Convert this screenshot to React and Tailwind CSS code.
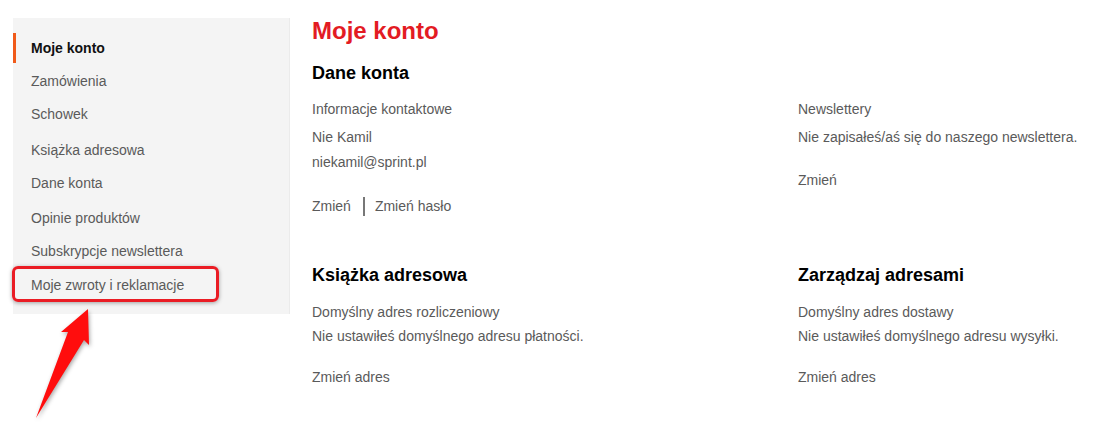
import React from 'react';

const navItems = [
    { label: 'Moje konto', active: true, gap: 'mt-[15px]' },
    { label: 'Zamówienia', gap: 'mt-[3px]' },
    { label: 'Schowek', gap: 'mt-[3px]' },
    { label: 'Książka adresowa', gap: 'mt-[6px]' },
    { label: 'Dane konta', gap: 'mt-[3px]' },
    { label: 'Opinie produktów', gap: 'mt-[5px]' },
    { label: 'Subskrypcje newslettera', gap: 'mt-[3px]' },
    { label: 'Moje zwroty i reklamacje', gap: 'mt-[4px]' },
];

function Sidebar() {
    return (
        <aside className="relative ml-[13px] mt-[18px] w-[277px] h-[296px] shrink-0 bg-[#f4f4f4] border-r border-[#ebebeb]">
            <ul className="flex flex-col">
                {navItems.map((item) => (
                    <li
                        key={item.label}
                        className={`${item.gap} relative h-[30px] flex items-center pl-[18px] text-[14px] ${
                            item.active ? 'font-bold text-[#111]' : 'text-[#5a5a5a]'
                        }`}
                    >
                        {item.active && <span className="absolute left-0 top-0 h-[30px] w-[3px] bg-[#f05a1a]" />}
                        {item.label}
                    </li>
                ))}
            </ul>
        </aside>
    );
}

function Row({ children, gap = '' }) {
    return <div className={`${gap} h-[20px] leading-[20px] text-[14px] text-[#5a5a5a]`}>{children}</div>;
}

export default function App() {
    return (
        <div
            className="relative w-[1100px] h-[426px] bg-white flex overflow-hidden"
            style={{ fontFamily: '"Liberation Sans", Arial, sans-serif' }}
        >
            <Sidebar />

            {/* Main content */}
            <main className="flex-1 pl-[22px]">
                <h1 className="mt-[16px] h-[30px] leading-[30px] text-[24px] font-bold text-[#e31b23]">Moje konto</h1>
                <h2 className="mt-[15px] h-[24px] leading-[24px] text-[18px] font-bold text-black">Dane konta</h2>

                <div className="mt-[14px] grid grid-cols-[486px_1fr]">
                    <div>
                        <Row>Informacje kontaktowe</Row>
                        <Row gap="mt-[8px]">Nie Kamil</Row>
                        <Row gap="mt-[5px]">niekamil@sprint.pl</Row>
                        <div className="mt-[24px] h-[20px] flex items-center text-[14px] text-[#5a5a5a]">
                            <span>Zmień</span>
                            <span className="ml-[12px] mr-[10px] w-[2px] h-[19px] bg-[#777]" />
                            <span>Zmień hasło</span>
                        </div>
                    </div>
                    <div>
                        <Row>Newslettery</Row>
                        <Row gap="mt-[8px]">Nie zapisałeś/aś się do naszego newslettera.</Row>
                        <Row gap="mt-[23px]">Zmień</Row>
                    </div>
                </div>

                <div className="mt-[47px] grid grid-cols-[486px_1fr]">
                    <div>
                        <h2 className="h-[24px] leading-[24px] text-[18px] font-bold text-black">Książka adresowa</h2>
                        <Row gap="mt-[15px]">Domyślny adres rozliczeniowy</Row>
                        <Row gap="mt-[4px]">Nie ustawiłeś domyślnego adresu płatności.</Row>
                        <Row gap="mt-[21px]">Zmień adres</Row>
                    </div>
                    <div>
                        <h2 className="h-[24px] leading-[24px] text-[18px] font-bold text-black">Zarządzaj adresami</h2>
                        <Row gap="mt-[15px]">Domyślny adres dostawy</Row>
                        <Row gap="mt-[4px]">Nie ustawiłeś domyślnego adresu wysyłki.</Row>
                        <Row gap="mt-[21px]">Zmień adres</Row>
                    </div>
                </div>
            </main>

            {/* Annotation: highlight box */}
            <div className="absolute left-[12px] top-[266px] w-[207px] h-[36px] rounded-[6px] border-[3px] border-[#ea1c24] shadow-[0_1px_4px_rgba(0,0,0,0.35)]" />

            {/* Annotation: arrow */}
            <svg
                className="absolute left-0 top-0 pointer-events-none"
                width="1100"
                height="426"
                style={{ filter: 'drop-shadow(1px 2px 2px rgba(0,0,0,0.35))' }}
            >
                <polygon points="88,309 89,345 84,340 36,418 68,332 61,332" fill="#ff0d0d" />
            </svg>
        </div>
    );
}
